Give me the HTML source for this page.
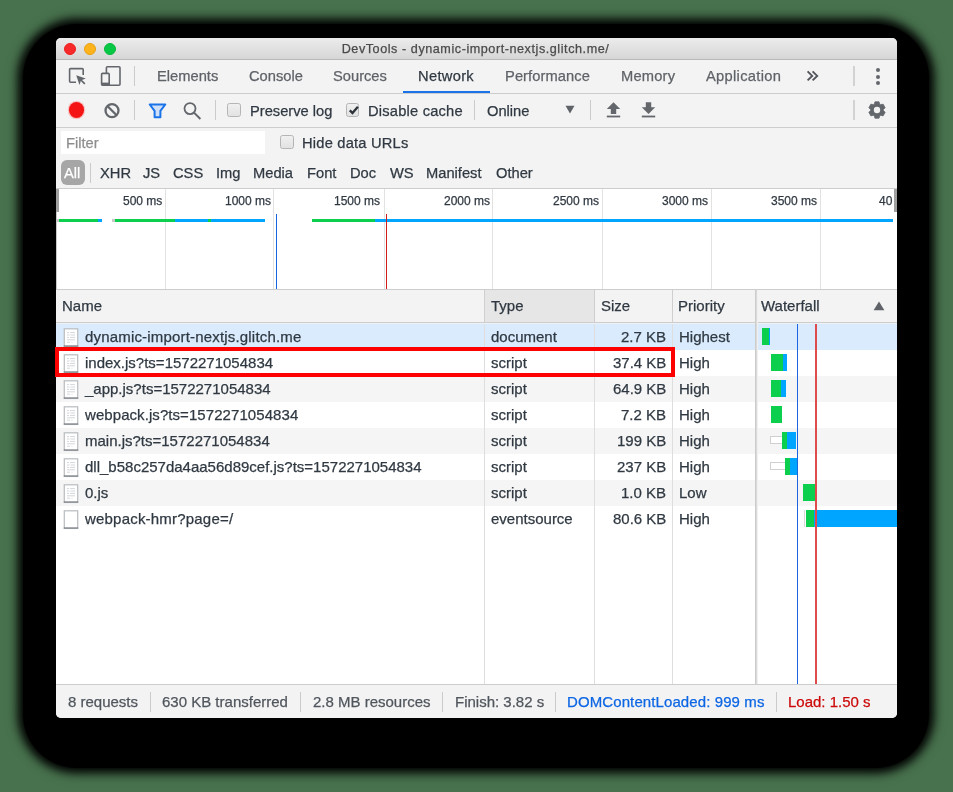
<!DOCTYPE html>
<html><head><meta charset="utf-8"><style>
html,body{margin:0;padding:0}
body{width:953px;height:792px;overflow:hidden;position:relative;background:rgb(72,114,78);font-family:"Liberation Sans",sans-serif}
.a{position:absolute}
.t{position:absolute;white-space:nowrap;-webkit-text-stroke:0.25px currentColor;will-change:transform}
svg.a{overflow:visible}
</style></head><body>
<div class="a" style="left:23px;top:24px;width:906px;height:744px;border-radius:54px;background:#000;box-shadow:0 0 10px 5px #000,0 0 18px 3px rgba(0,0,0,0.2)"></div>
<div class="a" style="left:56px;top:38px;width:841px;height:680px;background:#f3f3f3;border-radius:5px;overflow:hidden"></div>
<div class="a" style="left:56px;top:38px;width:841px;height:21px;background:linear-gradient(#ececec,#d6d6d6);border-radius:5px 5px 0 0"></div>
<div class="a" style="left:56px;top:59px;width:841px;height:1px;background:#b9b9b9;"></div>
<div class="a" style="left:64.1px;top:43.1px;width:10.3px;height:10.3px;border-radius:50%;background:#f8292a;border:0.7px solid #f01e1e"></div>
<div class="a" style="left:84.1px;top:43.1px;width:10.3px;height:10.3px;border-radius:50%;background:#fdb31c;border:0.7px solid #e8a010"></div>
<div class="a" style="left:104.1px;top:43.1px;width:10.3px;height:10.3px;border-radius:50%;background:#06c844;border:0.7px solid #05b83c"></div>
<div class="t" style="left:-1px;width:953px;text-align:center;top:41.73px;font-size:12.6px;letter-spacing:0.56px;line-height:15px;color:#4a4a4a">DevTools - dynamic-import-nextjs.glitch.me/</div>
<div class="a" style="left:56px;top:93px;width:841px;height:1px;background:#cdcdcd;"></div>
<svg class="a" style="left:68px;top:67px" width="19" height="19" viewBox="0 0 19 19">
<path d="M8 15.2H2.6a1 1 0 0 1-1-1V2.6a1 1 0 0 1 1-1h11.6a1 1 0 0 1 1 1V8" fill="none" stroke="#63676c" stroke-width="1.6"/>
<path d="M8.2 8.2L17.8 11.6L14 12.9L17.4 16.3L16.2 17.5L12.8 14.1L11.5 17.9Z" fill="#63676c"/></svg>
<svg class="a" style="left:100px;top:65px" width="22" height="22" viewBox="0 0 22 22">
<rect x="6.4" y="1.8" width="13.6" height="18.4" rx="1" fill="none" stroke="#63676c" stroke-width="1.6"/>
<rect x="1.6" y="8.4" width="7.6" height="11.8" rx="1" fill="#f3f3f3" stroke="#63676c" stroke-width="1.6"/>
<rect x="1.6" y="17.6" width="7.6" height="2.6" fill="#63676c"/></svg>
<div class="a" style="left:134px;top:66px;width:1px;height:20px;background:#cbcbcb;"></div>
<div class="t" style="left:157.40px;top:68.56px;font-size:14.7px;line-height:14.7px;color:#5f6368;">Elements</div>
<div class="t" style="left:248.60px;top:68.56px;font-size:14.7px;line-height:14.7px;color:#5f6368;">Console</div>
<div class="t" style="left:332.80px;top:68.56px;font-size:14.7px;line-height:14.7px;color:#5f6368;">Sources</div>
<div class="t" style="left:418.30px;top:68.56px;font-size:14.7px;line-height:14.7px;color:#303942;letter-spacing:0.3px">Network</div>
<div class="t" style="left:504.90px;top:68.56px;font-size:14.7px;line-height:14.7px;color:#5f6368;letter-spacing:0.08px">Performance</div>
<div class="t" style="left:620.60px;top:68.56px;font-size:14.7px;line-height:14.7px;color:#5f6368;letter-spacing:0.2px">Memory</div>
<div class="t" style="left:706.00px;top:68.56px;font-size:14.7px;line-height:14.7px;color:#5f6368;letter-spacing:0.3px">Application</div>
<svg class="a" style="left:800px;top:66px" width="24" height="20" viewBox="0 0 24 20"><path d="M7.6 5.4L12.2 9.9L7.6 14.4M12.6 5.4L17.2 9.9L12.6 14.4" fill="none" stroke="#50555b" stroke-width="1.9"/></svg>
<div class="a" style="left:403px;top:91px;width:87px;height:2px;background:#1a73e8;"></div>
<div class="a" style="left:853px;top:66px;width:1.7999999999999545px;height:20px;background:#d2d2d2;"></div>
<div class="a" style="left:876px;top:68.2px;width:4px;height:4px;border-radius:50%;background:#63676c"></div>
<div class="a" style="left:876px;top:74.5px;width:4px;height:4px;border-radius:50%;background:#63676c"></div>
<div class="a" style="left:876px;top:80.8px;width:4px;height:4px;border-radius:50%;background:#63676c"></div>
<div class="a" style="left:56px;top:127px;width:841px;height:1px;background:#cdcdcd;"></div>
<div class="a" style="left:68.8px;top:102.4px;width:15.2px;height:15.2px;border-radius:50%;background:#f41414;box-shadow:0 0 0 1.2px #f7c4c4"></div>
<svg class="a" style="left:103px;top:102px" width="18" height="18" viewBox="0 0 18 18">
<circle cx="9" cy="8.6" r="6.5" fill="none" stroke="#63676c" stroke-width="2.3"/><path d="M4.4 4L13.6 13.2" stroke="#63676c" stroke-width="2.3"/></svg>
<div class="a" style="left:134px;top:100px;width:1px;height:20px;background:#cbcbcb;"></div>
<svg class="a" style="left:148px;top:103px" width="19" height="17" viewBox="0 0 19 17">
<path d="M1.7 1.5H17.3L12.4 7.8V14.2H6.6V7.8Z" fill="#cfe0f8" stroke="#1a73e8" stroke-width="2" stroke-linejoin="round"/></svg>
<svg class="a" style="left:182px;top:101px" width="20" height="20" viewBox="0 0 20 20">
<circle cx="8" cy="7.6" r="5.5" fill="none" stroke="#63676c" stroke-width="1.8"/><path d="M12 11.6L18.4 18" stroke="#63676c" stroke-width="2"/></svg>
<div class="a" style="left:215px;top:100px;width:1px;height:20px;background:#cbcbcb;"></div>
<div class="a" style="left:227.3px;top:103.3px;width:11.4px;height:11.4px;border:1px solid #b5b5b5;border-radius:2.5px;background:linear-gradient(#f0f0f0,#e2e2e2)"></div>
<div class="t" style="left:250.40px;top:104.06px;font-size:14.7px;line-height:14.7px;color:#303942;">Preserve log</div>
<div class="a" style="left:346.1px;top:103.3px;width:11.4px;height:11.4px;border:1px solid #b5b5b5;border-radius:2.5px;background:linear-gradient(#f0f0f0,#e2e2e2)"></div><svg class="a" style="left:346.8px;top:104px" width="13" height="13" viewBox="0 0 13 13"><path d="M2.8 6.4L5.5 9.1L10.9 2.8" fill="none" stroke="#2d333a" stroke-width="2.3"/></svg>
<div class="t" style="left:368.40px;top:104.06px;font-size:14.7px;line-height:14.7px;color:#303942;letter-spacing:0.2px">Disable cache</div>
<div class="a" style="left:474px;top:100px;width:1.3000000000000114px;height:20px;background:#cbcbcb;"></div>
<div class="t" style="left:487.00px;top:104.06px;font-size:14.7px;line-height:14.7px;color:#303942;">Online</div>
<svg class="a" style="left:565px;top:105px" width="10" height="9" viewBox="0 0 10 9"><path d="M0.5 0.8H9.5L5 8.4Z" fill="#5f6368"/></svg>
<div class="a" style="left:590px;top:100px;width:1px;height:20px;background:#cbcbcb;"></div>
<svg class="a" style="left:605px;top:101px" width="17" height="17" viewBox="0 0 17 17">
<path d="M8.5 1.2L15.2 8H11.2V13H5.8V8H1.8Z" fill="#63676c"/><rect x="1.8" y="14.6" width="13.4" height="1.8" fill="#63676c"/></svg>
<svg class="a" style="left:640px;top:101px" width="17" height="17" viewBox="0 0 17 17">
<path d="M8.5 13L15.2 6.2H11.2V1.2H5.8V6.2H1.8Z" fill="#63676c"/><rect x="1.8" y="14.6" width="13.4" height="1.8" fill="#63676c"/></svg>
<div class="a" style="left:853px;top:100px;width:1.7999999999999545px;height:20px;background:#d2d2d2;"></div>
<svg class="a" style="left:867.4px;top:100.1px" width="20" height="20" viewBox="0 0 20 20">
<polygon points="7.00,4.80 7.94,1.75 12.06,1.75 13.00,4.80 13.00,4.80 16.11,4.10 18.17,7.66 16.00,10.00 16.00,10.00 18.17,12.34 16.11,15.90 13.00,15.20 13.00,15.20 12.06,18.25 7.94,18.25 7.00,15.20 7.00,15.20 3.89,15.90 1.83,12.34 4.00,10.00 4.00,10.00 1.83,7.66 3.89,4.10 7.00,4.80" fill="#63676c" stroke="#63676c" stroke-width="0.7" stroke-linejoin="round"/><circle cx="10" cy="10" r="3.2" fill="#f3f3f3"/></svg>
<div class="a" style="left:61px;top:131px;width:204px;height:23px;background:#fff;"></div>
<div class="t" style="left:65.60px;top:136.26px;font-size:14.7px;line-height:14.7px;color:#8e8e8e;">Filter</div>
<div class="a" style="left:280.3px;top:135.3px;width:11.4px;height:11.4px;border:1px solid #b5b5b5;border-radius:2.5px;background:linear-gradient(#f0f0f0,#e2e2e2)"></div>
<div class="t" style="left:302.00px;top:136.06px;font-size:14.7px;line-height:14.7px;color:#303942;letter-spacing:0.2px">Hide data URLs</div>
<div class="a" style="left:61px;top:160px;width:24px;height:25px;background:#a6a6a6;border-radius:6px"></div>
<div class="t" style="left:64.00px;top:166.06px;font-size:14.7px;line-height:14.7px;color:#fff;">All</div>
<div class="a" style="left:90px;top:163px;width:1px;height:20px;background:#cbcbcb;"></div>
<div class="t" style="left:100.00px;top:166.06px;font-size:14.7px;line-height:14.7px;color:#303942;">XHR</div>
<div class="t" style="left:142.80px;top:166.06px;font-size:14.7px;line-height:14.7px;color:#303942;">JS</div>
<div class="t" style="left:172.80px;top:166.06px;font-size:14.7px;line-height:14.7px;color:#303942;">CSS</div>
<div class="t" style="left:215.50px;top:166.06px;font-size:14.7px;line-height:14.7px;color:#303942;">Img</div>
<div class="t" style="left:253.40px;top:166.06px;font-size:14.7px;line-height:14.7px;color:#303942;">Media</div>
<div class="t" style="left:307.20px;top:166.06px;font-size:14.7px;line-height:14.7px;color:#303942;">Font</div>
<div class="t" style="left:350.40px;top:166.06px;font-size:14.7px;line-height:14.7px;color:#303942;">Doc</div>
<div class="t" style="left:389.60px;top:166.06px;font-size:14.7px;line-height:14.7px;color:#303942;">WS</div>
<div class="t" style="left:426.20px;top:166.06px;font-size:14.7px;line-height:14.7px;color:#303942;">Manifest</div>
<div class="t" style="left:496.00px;top:166.06px;font-size:14.7px;line-height:14.7px;color:#303942;">Other</div>
<div class="a" style="left:56px;top:188px;width:841px;height:1px;background:#cdcdcd;"></div>
<div class="a" style="left:56px;top:189px;width:841px;height:100px;background:#fff;"></div>
<div class="a" style="left:56px;top:189px;width:1px;height:100px;background:#c8c8c8;"></div>
<div class="a" style="left:165px;top:189px;width:1px;height:100px;background:#e2e2e2;"></div>
<div class="t" style="right:791.10px;top:194.54px;font-size:12px;line-height:12px;color:#303942;text-align:right;">500 ms</div>
<div class="a" style="left:273px;top:189px;width:1px;height:100px;background:#e2e2e2;"></div>
<div class="t" style="right:681.87px;top:194.54px;font-size:12px;line-height:12px;color:#303942;text-align:right;">1000 ms</div>
<div class="a" style="left:384px;top:189px;width:1px;height:100px;background:#e2e2e2;"></div>
<div class="t" style="right:572.64px;top:194.54px;font-size:12px;line-height:12px;color:#303942;text-align:right;">1500 ms</div>
<div class="a" style="left:492px;top:189px;width:1px;height:100px;background:#e2e2e2;"></div>
<div class="t" style="right:463.41px;top:194.54px;font-size:12px;line-height:12px;color:#303942;text-align:right;">2000 ms</div>
<div class="a" style="left:602px;top:189px;width:1px;height:100px;background:#e2e2e2;"></div>
<div class="t" style="right:354.18px;top:194.54px;font-size:12px;line-height:12px;color:#303942;text-align:right;">2500 ms</div>
<div class="a" style="left:711px;top:189px;width:1px;height:100px;background:#e2e2e2;"></div>
<div class="t" style="right:244.95px;top:194.54px;font-size:12px;line-height:12px;color:#303942;text-align:right;">3000 ms</div>
<div class="a" style="left:820px;top:189px;width:1px;height:100px;background:#e2e2e2;"></div>
<div class="t" style="right:135.72px;top:194.54px;font-size:12px;line-height:12px;color:#303942;text-align:right;">3500 ms</div>
<div class="t" style="left:878.60px;top:194.54px;font-size:12px;line-height:12px;color:#303942;">40</div>
<div class="a" style="left:56px;top:189px;width:3px;height:23px;background:#a0a0a0;"></div>
<div class="a" style="left:894px;top:189px;width:3px;height:23px;background:#a0a0a0;"></div>
<div class="a" style="left:57px;top:219px;width:2px;height:3px;background:#c9c9c9;"></div>
<div class="a" style="left:59px;top:219px;width:39px;height:3px;background:#0ccf4e;"></div>
<div class="a" style="left:98px;top:219px;width:4px;height:3px;background:#00a5ff;"></div>
<div class="a" style="left:112px;top:219px;width:3px;height:3px;background:#c9c9c9;"></div>
<div class="a" style="left:115px;top:219px;width:60px;height:3px;background:#0ccf4e;"></div>
<div class="a" style="left:175px;top:219px;width:90px;height:3px;background:#00a5ff;"></div>
<div class="a" style="left:208px;top:219px;width:3px;height:3px;background:#0ccf4e;"></div>
<div class="a" style="left:312px;top:219px;width:63px;height:3px;background:#0ccf4e;"></div>
<div class="a" style="left:375px;top:219px;width:518px;height:3px;background:#00a5ff;"></div>
<div class="a" style="left:276px;top:214px;width:1.3000000000000114px;height:75px;background:#1565e0;"></div>
<div class="a" style="left:386px;top:214px;width:1.1999999999999886px;height:75px;background:#d31c1c;"></div>
<div class="a" style="left:56px;top:289px;width:841px;height:1px;background:#cdcdcd;"></div>
<div class="a" style="left:485px;top:290px;width:109px;height:32px;background:#e6e6e6;"></div>
<div class="a" style="left:56px;top:322px;width:841px;height:1px;background:#cdcdcd;"></div>
<div class="a" style="left:56px;top:323px;width:841px;height:1px;background:#eef2f5;"></div>
<div class="t" style="left:61.70px;top:298.30px;font-size:15px;line-height:15px;color:#303942;">Name</div>
<div class="t" style="left:490.70px;top:298.30px;font-size:15px;line-height:15px;color:#303942;">Type</div>
<div class="t" style="left:600.60px;top:298.30px;font-size:15px;line-height:15px;color:#303942;">Size</div>
<div class="t" style="left:678.40px;top:298.30px;font-size:15px;line-height:15px;color:#303942;">Priority</div>
<div class="t" style="left:760.70px;top:298.30px;font-size:15px;line-height:15px;color:#303942;">Waterfall</div>
<svg class="a" style="left:873px;top:301px" width="12" height="10" viewBox="0 0 12 10"><path d="M6 0.6L11.4 9.2H0.6Z" fill="#5f6368"/></svg>
<div class="a" style="left:56px;top:324px;width:841px;height:361px;background:#fff;"></div>
<div class="a" style="left:56px;top:324px;width:841px;height:26px;background:#d9ebfc;"></div>
<div class="a" style="left:56px;top:350px;width:841px;height:26px;background:#fff;"></div>
<div class="a" style="left:56px;top:376px;width:841px;height:26px;background:#f5f5f5;"></div>
<div class="a" style="left:56px;top:402px;width:841px;height:26px;background:#fff;"></div>
<div class="a" style="left:56px;top:428px;width:841px;height:26px;background:#f5f5f5;"></div>
<div class="a" style="left:56px;top:454px;width:841px;height:26px;background:#fff;"></div>
<div class="a" style="left:56px;top:480px;width:841px;height:26px;background:#f5f5f5;"></div>
<div class="a" style="left:56px;top:506px;width:841px;height:26px;background:#fff;"></div>
<div class="t" style="left:85.00px;top:328.70px;font-size:15px;line-height:15px;color:#303942;letter-spacing:0.18px">dynamic-import-nextjs.glitch.me</div>
<div class="t" style="left:490.50px;top:328.70px;font-size:15px;line-height:15px;color:#303942;">document</div>
<div class="t" style="right:286.50px;top:328.70px;font-size:15px;line-height:15px;color:#303942;text-align:right;">2.7 KB</div>
<div class="t" style="left:679.00px;top:328.70px;font-size:15px;line-height:15px;color:#303942;">Highest</div>
<svg class="a" style="left:63px;top:327.7px" width="16" height="19" viewBox="0 0 16 19">
<rect x="1.3" y="0.8" width="13.4" height="17.6" fill="#fff" stroke="#bcc0c4" stroke-width="1.3"/><path d="M0.8 18H15.2" stroke="#70757a" stroke-width="1.1"/>
<path d="M4 4.6H6M7 4.6H12M4 7H6.5M7.5 7H12M4 9.4H6M7 9.4H12M4 11.8H12M4 14.2H7M8.5 14.2H9.5" stroke="#c9cccf" stroke-width="0.8"/></svg>
<div class="t" style="left:85.00px;top:354.70px;font-size:15px;line-height:15px;color:#303942;">index.js?ts=1572271054834</div>
<div class="t" style="left:490.50px;top:354.70px;font-size:15px;line-height:15px;color:#303942;">script</div>
<div class="t" style="right:286.50px;top:354.70px;font-size:15px;line-height:15px;color:#303942;text-align:right;">37.4 KB</div>
<div class="t" style="left:679.00px;top:354.70px;font-size:15px;line-height:15px;color:#303942;">High</div>
<svg class="a" style="left:63px;top:353.7px" width="16" height="19" viewBox="0 0 16 19">
<rect x="1.3" y="0.8" width="13.4" height="17.6" fill="#fff" stroke="#bcc0c4" stroke-width="1.3"/><path d="M0.8 18H15.2" stroke="#70757a" stroke-width="1.1"/>
<path d="M4 4.6H6M7 4.6H12M4 7H6.5M7.5 7H12M4 9.4H6M7 9.4H12M4 11.8H12M4 14.2H7M8.5 14.2H9.5" stroke="#c9cccf" stroke-width="0.8"/></svg>
<div class="t" style="left:85.00px;top:380.70px;font-size:15px;line-height:15px;color:#303942;">_app.js?ts=1572271054834</div>
<div class="t" style="left:490.50px;top:380.70px;font-size:15px;line-height:15px;color:#303942;">script</div>
<div class="t" style="right:286.50px;top:380.70px;font-size:15px;line-height:15px;color:#303942;text-align:right;">64.9 KB</div>
<div class="t" style="left:679.00px;top:380.70px;font-size:15px;line-height:15px;color:#303942;">High</div>
<svg class="a" style="left:63px;top:379.7px" width="16" height="19" viewBox="0 0 16 19">
<rect x="1.3" y="0.8" width="13.4" height="17.6" fill="#fff" stroke="#bcc0c4" stroke-width="1.3"/><path d="M0.8 18H15.2" stroke="#70757a" stroke-width="1.1"/>
<path d="M4 4.6H6M7 4.6H12M4 7H6.5M7.5 7H12M4 9.4H6M7 9.4H12M4 11.8H12M4 14.2H7M8.5 14.2H9.5" stroke="#c9cccf" stroke-width="0.8"/></svg>
<div class="t" style="left:85.00px;top:406.70px;font-size:15px;line-height:15px;color:#303942;letter-spacing:0.07px">webpack.js?ts=1572271054834</div>
<div class="t" style="left:490.50px;top:406.70px;font-size:15px;line-height:15px;color:#303942;">script</div>
<div class="t" style="right:286.50px;top:406.70px;font-size:15px;line-height:15px;color:#303942;text-align:right;">7.2 KB</div>
<div class="t" style="left:679.00px;top:406.70px;font-size:15px;line-height:15px;color:#303942;">High</div>
<svg class="a" style="left:63px;top:405.7px" width="16" height="19" viewBox="0 0 16 19">
<rect x="1.3" y="0.8" width="13.4" height="17.6" fill="#fff" stroke="#bcc0c4" stroke-width="1.3"/><path d="M0.8 18H15.2" stroke="#70757a" stroke-width="1.1"/>
<path d="M4 4.6H6M7 4.6H12M4 7H6.5M7.5 7H12M4 9.4H6M7 9.4H12M4 11.8H12M4 14.2H7M8.5 14.2H9.5" stroke="#c9cccf" stroke-width="0.8"/></svg>
<div class="t" style="left:85.00px;top:432.70px;font-size:15px;line-height:15px;color:#303942;">main.js?ts=1572271054834</div>
<div class="t" style="left:490.50px;top:432.70px;font-size:15px;line-height:15px;color:#303942;">script</div>
<div class="t" style="right:286.50px;top:432.70px;font-size:15px;line-height:15px;color:#303942;text-align:right;">199 KB</div>
<div class="t" style="left:679.00px;top:432.70px;font-size:15px;line-height:15px;color:#303942;">High</div>
<svg class="a" style="left:63px;top:431.7px" width="16" height="19" viewBox="0 0 16 19">
<rect x="1.3" y="0.8" width="13.4" height="17.6" fill="#fff" stroke="#bcc0c4" stroke-width="1.3"/><path d="M0.8 18H15.2" stroke="#70757a" stroke-width="1.1"/>
<path d="M4 4.6H6M7 4.6H12M4 7H6.5M7.5 7H12M4 9.4H6M7 9.4H12M4 11.8H12M4 14.2H7M8.5 14.2H9.5" stroke="#c9cccf" stroke-width="0.8"/></svg>
<div class="t" style="left:85.00px;top:458.70px;font-size:15px;line-height:15px;color:#303942;">dll_b58c257da4aa56d89cef.js?ts=1572271054834</div>
<div class="t" style="left:490.50px;top:458.70px;font-size:15px;line-height:15px;color:#303942;">script</div>
<div class="t" style="right:286.50px;top:458.70px;font-size:15px;line-height:15px;color:#303942;text-align:right;">237 KB</div>
<div class="t" style="left:679.00px;top:458.70px;font-size:15px;line-height:15px;color:#303942;">High</div>
<svg class="a" style="left:63px;top:457.7px" width="16" height="19" viewBox="0 0 16 19">
<rect x="1.3" y="0.8" width="13.4" height="17.6" fill="#fff" stroke="#bcc0c4" stroke-width="1.3"/><path d="M0.8 18H15.2" stroke="#70757a" stroke-width="1.1"/>
<path d="M4 4.6H6M7 4.6H12M4 7H6.5M7.5 7H12M4 9.4H6M7 9.4H12M4 11.8H12M4 14.2H7M8.5 14.2H9.5" stroke="#c9cccf" stroke-width="0.8"/></svg>
<div class="t" style="left:85.00px;top:484.70px;font-size:15px;line-height:15px;color:#303942;">0.js</div>
<div class="t" style="left:490.50px;top:484.70px;font-size:15px;line-height:15px;color:#303942;">script</div>
<div class="t" style="right:286.50px;top:484.70px;font-size:15px;line-height:15px;color:#303942;text-align:right;">1.0 KB</div>
<div class="t" style="left:679.00px;top:484.70px;font-size:15px;line-height:15px;color:#303942;">Low</div>
<svg class="a" style="left:63px;top:483.7px" width="16" height="19" viewBox="0 0 16 19">
<rect x="1.3" y="0.8" width="13.4" height="17.6" fill="#fff" stroke="#bcc0c4" stroke-width="1.3"/><path d="M0.8 18H15.2" stroke="#70757a" stroke-width="1.1"/>
<path d="M4 4.6H6M7 4.6H12M4 7H6.5M7.5 7H12M4 9.4H6M7 9.4H12M4 11.8H12M4 14.2H7M8.5 14.2H9.5" stroke="#c9cccf" stroke-width="0.8"/></svg>
<div class="t" style="left:85.00px;top:510.70px;font-size:15px;line-height:15px;color:#303942;letter-spacing:0.2px">webpack-hmr?page=/</div>
<div class="t" style="left:490.50px;top:510.70px;font-size:15px;line-height:15px;color:#303942;">eventsource</div>
<div class="t" style="right:286.50px;top:510.70px;font-size:15px;line-height:15px;color:#303942;text-align:right;">80.6 KB</div>
<div class="t" style="left:679.00px;top:510.70px;font-size:15px;line-height:15px;color:#303942;">High</div>
<svg class="a" style="left:63px;top:509.7px" width="16" height="19" viewBox="0 0 16 19">
<rect x="1.3" y="0.8" width="13.4" height="17.6" fill="#fff" stroke="#bcc0c4" stroke-width="1.3"/><path d="M0.8 18H15.2" stroke="#70757a" stroke-width="1.1"/></svg>
<div class="a" style="left:484px;top:290px;width:1px;height:32px;background:#cfcfcf;"></div>
<div class="a" style="left:484px;top:324px;width:1px;height:361px;background:#dedede;"></div>
<div class="a" style="left:594px;top:290px;width:1px;height:32px;background:#cfcfcf;"></div>
<div class="a" style="left:594px;top:324px;width:1px;height:361px;background:#dedede;"></div>
<div class="a" style="left:672px;top:290px;width:1px;height:32px;background:#cfcfcf;"></div>
<div class="a" style="left:672px;top:324px;width:1px;height:361px;background:#dedede;"></div>
<div class="a" style="left:755px;top:290px;width:1px;height:395px;background:#cccccc;"></div>
<div class="a" style="left:756px;top:290px;width:1px;height:395px;background:#dadada;"></div>
<div class="a" style="left:757px;top:290px;width:1px;height:395px;background:#f0f0f0;"></div>
<div class="a" style="left:762px;top:327.5px;width:7px;height:17.0px;background:#0ccf4e;"></div>
<div class="a" style="left:769px;top:327.5px;width:1.2000000000000455px;height:17.0px;background:#00a5ff;"></div>
<div class="a" style="left:771px;top:353.5px;width:12.299999999999955px;height:17.0px;background:#0ccf4e;"></div>
<div class="a" style="left:783.3px;top:353.5px;width:3.900000000000091px;height:17.0px;background:#00a5ff;"></div>
<div class="a" style="left:771px;top:379.5px;width:9.799999999999955px;height:17.0px;background:#0ccf4e;"></div>
<div class="a" style="left:780.8px;top:379.5px;width:5.2000000000000455px;height:17.0px;background:#00a5ff;"></div>
<div class="a" style="left:771px;top:405.5px;width:10.700000000000045px;height:17.0px;background:#0ccf4e;"></div>
<div class="a" style="left:782px;top:431.5px;width:5.399999999999977px;height:17.0px;background:#0ccf4e;"></div>
<div class="a" style="left:787.4px;top:431.5px;width:8.899999999999977px;height:17.0px;background:#00a5ff;"></div>
<div class="a" style="left:784.8px;top:457.5px;width:4.900000000000091px;height:17.0px;background:#0ccf4e;"></div>
<div class="a" style="left:789.7px;top:457.5px;width:7.5px;height:17.0px;background:#00a5ff;"></div>
<div class="a" style="left:803px;top:483.5px;width:12px;height:17.0px;background:#0ccf4e;"></div>
<div class="a" style="left:803.5px;top:509.5px;width:1.5px;height:17.0px;background:#d8d8d8;"></div>
<div class="a" style="left:806px;top:509.5px;width:7.5px;height:17.0px;background:#0ccf4e;"></div>
<div class="a" style="left:813.5px;top:509.5px;width:83.5px;height:17.0px;background:#00a5ff;"></div>
<div class="a" style="left:770px;top:435.5px;width:12px;height:8.5px;background:#fff;border:1px solid #d0d0d0;border-right:none;box-sizing:border-box"></div>
<div class="a" style="left:770px;top:461.5px;width:14.700000000000045px;height:8.5px;background:#fff;border:1px solid #d0d0d0;border-right:none;box-sizing:border-box"></div>
<div class="a" style="left:796.7px;top:324px;width:1.5px;height:361px;background:#1a66e0;"></div>
<div class="a" style="left:815.2px;top:324px;width:1.5px;height:361px;background:#dd4b4b;"></div>
<div class="a" style="left:56px;top:684px;width:841px;height:1px;background:#cdcdcd;"></div>
<div class="a" style="left:56px;top:685px;width:841px;height:33px;background:#f3f3f3;border-radius:0 0 5px 5px"></div>
<div class="t" style="left:68.30px;top:694.20px;font-size:15px;line-height:15px;color:#50565d;">8 requests</div>
<div class="t" style="left:161.80px;top:694.20px;font-size:15px;line-height:15px;color:#50565d;">630 KB transferred</div>
<div class="t" style="left:312.50px;top:694.20px;font-size:15px;line-height:15px;color:#50565d;">2.8 MB resources</div>
<div class="t" style="left:455.00px;top:694.20px;font-size:15px;line-height:15px;color:#50565d;">Finish: 3.82 s</div>
<div class="t" style="left:567.00px;top:694.20px;font-size:15px;line-height:15px;color:#0d66e4;letter-spacing:0.1px">DOMContentLoaded: 999 ms</div>
<div class="t" style="left:788.30px;top:694.20px;font-size:15px;line-height:15px;color:#cc0a0a;">Load: 1.50 s</div>
<div class="a" style="left:150px;top:692px;width:1px;height:20px;background:#cbcbcb;"></div>
<div class="a" style="left:300px;top:692px;width:1px;height:20px;background:#cbcbcb;"></div>
<div class="a" style="left:442px;top:692px;width:1px;height:20px;background:#cbcbcb;"></div>
<div class="a" style="left:555px;top:692px;width:1px;height:20px;background:#cbcbcb;"></div>
<div class="a" style="left:776px;top:692px;width:1px;height:20px;background:#cbcbcb;"></div>
<div class="a" style="left:55px;top:347px;width:620px;height:30px;border:4px solid #ff0000;box-sizing:border-box"></div>
</body></html>
